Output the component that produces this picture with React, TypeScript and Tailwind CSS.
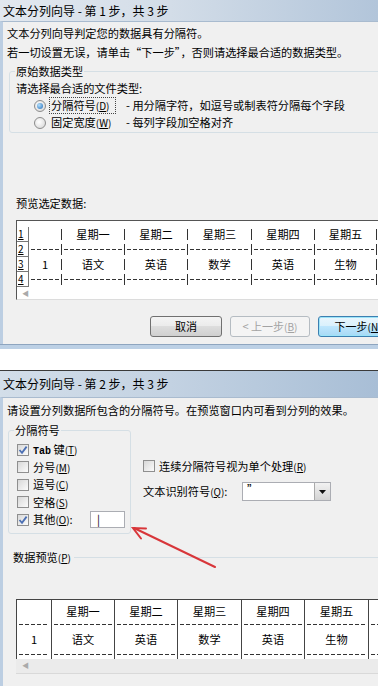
import React from "react";

const Radio = ({ checked }: { checked?: boolean }) => (
  <span className="w-[12px] h-[12px] shrink-0 rounded-full border border-[#8c8c8c] bg-[radial-gradient(circle_at_40%_40%,#ffffff,#d2d2d2)] flex items-center justify-center">
    {checked && (
      <span className="w-[6px] h-[6px] rounded-full bg-[radial-gradient(circle_at_35%_35%,#b5e0fb,#1e6cbc)]" />
    )}
  </span>
);

const Check = ({ checked }: { checked?: boolean }) => (
  <span className="w-[12px] h-[12px] shrink-0 border border-[#8f8f8f] bg-[linear-gradient(135deg,#d8d8d8,#fbfbfb)] flex items-center justify-center">
    {checked && (
      <svg width="10" height="10" viewBox="0 0 10 10">
        <path d="M1.5 5 L4 7.8 L8.6 1.6" stroke="#4b6fb3" strokeWidth="1.8" fill="none" />
      </svg>
    )}
  </span>
);

const Key = ({ k }: { k: string }) => (
  <span className="text-[10px]">
    (<span className="underline">{k}</span>)
  </span>
);

const Dashes = () => (
  <div className="flex-1 mx-[2px] h-px bg-[repeating-linear-gradient(90deg,#333_0_4px,transparent_4px_6px)]" />
);

const Pipe = () => <span className="w-px h-[11px] bg-[#333] shrink-0" />;

const cols1 = ["w-[33px]", "w-[63px]", "w-[63px]", "w-[64px]", "w-[63px]", "w-[62px]"];

const TextRow = ({ cells }: { cells: string[] }) => (
  <div className="h-[15px] flex">
    {cells.map((c, i) => (
      <div key={i} className={`${cols1[i]} flex items-center`}>
        <span className="flex-1 text-center">{c}</span>
        <Pipe />
      </div>
    ))}
  </div>
);

const DashRow = () => (
  <div className="h-[15px] flex">
    {cols1.map((w, i) => (
      <div key={i} className={`${w} flex items-center`}>
        <Dashes />
        <Pipe />
      </div>
    ))}
  </div>
);

const cols2 = ["w-[35px]", "w-[63px]", "w-[63px]", "w-[64px]", "w-[63px]", "w-[64px]", "w-[20px]"];
const head2 = ["", "星期一", "星期二", "星期三", "星期四", "星期五", ""];
const data2 = ["1", "语文", "英语", "数学", "英语", "生物", ""];

export default function App() {
  return (
    <div className="relative w-[378px] h-[686px] overflow-hidden bg-white text-black text-[11.2px] font-[family-name:'Noto_Sans_CJK_SC',sans-serif]">
      {/* Step 1 */}
      <div className="h-[349px] flex flex-col">
        <div className="h-[21px] flex items-center pl-[3px] text-[12px] bg-[linear-gradient(90deg,#e2e8ef_0%,#d3dde8_45%,#b2c5da_100%)]">
          文本分列向导 - 第 1 步，共 3 步
        </div>
        <div className="flex-1 flex flex-col bg-[#f0f0f0] border-l-[3px] border-l-[#bccee2] border-t border-t-[#a9bbcf] px-[4px]">
          <div className="mt-[2px] h-[19px] leading-[19px]">文本分列向导判定您的数据具有分隔符。</div>
          <div className="h-[19px] leading-[19px]">若一切设置无误，请单击“下一步”，否则请选择最合适的数据类型。</div>
          <fieldset className="mt-[1px] ml-[2px] -mr-[20px] border border-[#d5dfe5] rounded-[3px]">
            <legend className="ml-[5px] px-[1px] h-[16px] leading-[16px]">原始数据类型</legend>
            <div className="pl-[6px] pb-[1px]">
              <div className="h-[18px] flex items-center">请选择最合适的文件类型:</div>
              <div className="h-[17px] flex items-center">
                <span className="ml-[18px]"><Radio checked /></span>
                <span className="ml-[3px] w-[67px] border border-dotted border-[#444] px-[1px] leading-[14px]">
                  分隔符号<Key k="D" />
                </span>
                <span className="ml-[10px]">- 用分隔字符，如逗号或制表符分隔每个字段</span>
              </div>
              <div className="h-[17px] flex items-center">
                <span className="ml-[18px]"><Radio /></span>
                <span className="ml-[3px] w-[67px] px-[2px]">
                  固定宽度<Key k="W" />
                </span>
                <span className="ml-[10px]">- 每列字段加空格对齐</span>
              </div>
            </div>
          </fieldset>
          <div className="mt-[61px] h-[19px] leading-[19px] ml-[9px]">预览选定数据:</div>
          <div className="mt-[7px] ml-[9px] -mr-[20px] bg-white border-t border-l border-[#555] border-b border-b-[#dcdcdc] flex flex-col">
            <div className="flex pt-[6px]">
              <div className="w-[12px] flex flex-col text-[10px] leading-[14px]">
                {["1", "2", "3", "4"].map((n) => (
                  <div key={n} className="h-[15px] border-b border-r border-[#777] pl-[1px] underline">{n}</div>
                ))}
              </div>
              <div className="flex flex-col">
                <TextRow cells={["", "星期一", "星期二", "星期三", "星期四", "星期五"]} />
                <DashRow />
                <TextRow cells={["1", "语文", "英语", "数学", "英语", "生物"]} />
                <DashRow />
              </div>
            </div>
            <div className="h-[12px] flex items-center pl-[5px] text-[7px] text-[#aaa]">◀</div>
          </div>
          <div className="mt-[16px] flex ml-[143px] gap-[8px] text-[11px]">
            <div className="h-[21px] w-[72px] shrink-0 rounded-[3px] border border-[#707070] bg-[linear-gradient(#f4f4f4_0%,#ebebeb_49%,#dddddd_50%,#cfcfcf_100%)] flex items-center justify-center">
              取消
            </div>
            <div className="h-[21px] w-[80px] shrink-0 rounded-[3px] border border-[#b5bcc2] bg-[#f4f4f4] text-[#a3a3a3] flex items-center justify-center">
              &lt; 上一步<Key k="B" />
            </div>
            <div className="h-[21px] w-[80px] shrink-0 rounded-[3px] border border-[#3c7fb1] shadow-[inset_0_0_0_1px_#9ce4f8] bg-[linear-gradient(#eaf6fd_0%,#d9f0fc_49%,#bee6fd_50%,#a7d9f5_100%)] flex items-center justify-center">
              下一步<Key k="N" />
            </div>
          </div>
        </div>
        <div className="h-[5px] bg-[#bcd0e5] border-t border-[#8ea5bf]" />
      </div>

      {/* Step 2 */}
      <div className="mt-[21px] h-[316px] flex flex-col border-t border-[#3a3a3a]">
        <div className="h-[26px] flex items-center pl-[3px] text-[12px] bg-[linear-gradient(90deg,#d3dee9_0%,#c3d2e2_45%,#a8bed6_100%)]">
          文本分列向导 - 第 2 步，共 3 步
        </div>
        <div className="flex-1 flex flex-col bg-[#f0f0f0] border-l-[3px] border-l-[#bccee2] border-t border-t-[#a9bbcf] px-[4px]">
          <div className="mt-[3px] h-[19px] leading-[19px]">请设置分列数据所包含的分隔符号。在预览窗口内可看到分列的效果。</div>
          <div className="flex">
            <fieldset className="mt-[2px] ml-[1px] w-[123px] border border-[#d5dfe5] rounded-[3px]">
              <legend className="ml-[5px] px-[1px] h-[16px] leading-[16px]">分隔符号</legend>
              <div className="pt-[3px] pb-[4px] pl-[8px]">
                <div className="h-[17.5px] flex items-center gap-[4px]">
                  <Check checked />
                  <span><span className="font-[family-name:'Liberation_Mono',monospace] text-[10px] font-bold">Tab</span> 键<Key k="T" /></span>
                </div>
                <div className="h-[17.5px] flex items-center gap-[4px]">
                  <Check />
                  <span>分号<Key k="M" /></span>
                </div>
                <div className="h-[17.5px] flex items-center gap-[4px]">
                  <Check />
                  <span>逗号<Key k="C" /></span>
                </div>
                <div className="h-[17.5px] flex items-center gap-[4px]">
                  <Check />
                  <span>空格<Key k="S" /></span>
                </div>
                <div className="h-[17.5px] flex items-center gap-[4px]">
                  <Check checked />
                  <span className="w-[53px]">其他<Key k="O" />:</span>
                  <span className="h-[17px] w-[35px] bg-white border border-[#abadb3] flex items-center pl-[6px] text-[11px] leading-none">|</span>
                </div>
              </div>
            </fieldset>
            <div className="ml-[12px] flex flex-col">
              <div className="mt-[37px] h-[18px] flex items-center gap-[4px]">
                <Check />
                <span>连续分隔符号视为单个处理<Key k="R" /></span>
              </div>
              <div className="mt-[7px] h-[19px] flex items-center">
                <span className="w-[99px]">文本识别符号<Key k="Q" />:</span>
                <div className="w-[89px] h-[19px] bg-white border border-[#abadb3] flex">
                  <span className="flex-1 pl-[4px] leading-[12px] text-[11px]">”</span>
                  <span className="w-[16px] border-l border-[#aaa] bg-[linear-gradient(#f2f2f2,#d4d4d4)] flex items-center justify-center">
                    <svg width="7" height="4" viewBox="0 0 7 4"><path d="M0 0 H7 L3.5 4 Z" fill="#111" /></svg>
                  </span>
                </div>
              </div>
            </div>
          </div>
          <div className="mt-[14px] h-[19px] flex items-center">
            <span className="ml-[6px]">数据预览<Key k="P" /></span>
            <span className="flex-1 h-px bg-[#d5dfe5] ml-[3px] -mr-[4px]" />
          </div>
          <div className="mt-[32px] ml-[9px] -mr-[20px] flex flex-col">
            <div className="flex bg-white border-t border-l border-[#444] h-[60px]">
              {cols2.map((w, i) => (
                <div key={i} className={`${w} shrink-0 flex flex-col border-r border-[#444]`}>
                  <div className="h-[24px] flex items-center justify-center">{head2[i]}</div>
                  <div className="flex"><Dashes /></div>
                  <div className="h-[29px] flex items-center justify-center">{data2[i]}</div>
                  <div className="flex"><Dashes /></div>
                </div>
              ))}
            </div>
            <div className="h-[14px] bg-[#ebebeb] flex items-center pl-[6px] text-[7px] text-[#aaa]">◀</div>
            <div className="h-[5px] bg-[#f0f0f0] border-t border-[#d9d9d9]" />
          </div>
        </div>
      </div>

      {/* red arrow */}
      <svg className="absolute left-0 top-0 pointer-events-none" width="378" height="686" viewBox="0 0 378 686">
        <g stroke="#d8363a" strokeWidth="2" fill="none" strokeLinecap="round">
          <path d="M215 567 L134 528" />
          <path d="M146 528.5 L133 528 L141 538.5" />
        </g>
      </svg>
    </div>
  );
}
